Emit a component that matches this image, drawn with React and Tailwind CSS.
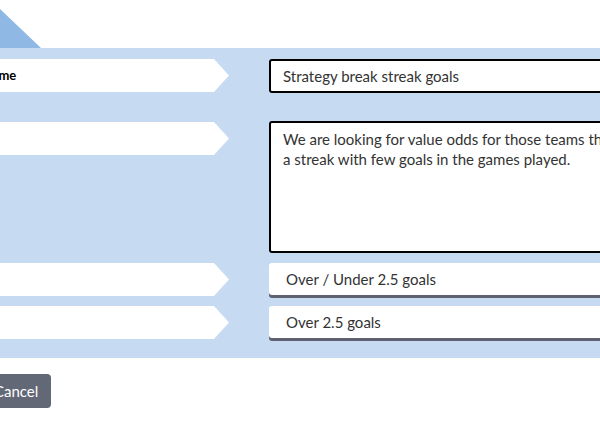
const font = { fontFamily: 'Lato, "Open Sans", sans-serif' }

function Label({ children }) {
  return (
    <div className="flex h-[33px] w-[269px] shrink-0 items-center bg-white pl-[22px] text-[13px] font-bold text-black [clip-path:polygon(0_0,254px_0,269px_50%,254px_100%,0_100%)]">
      {children}
    </div>
  )
}

function Select({ children }) {
  return (
    <div className="flex h-[32px] w-[400px] shrink-0 items-center rounded-[3px] bg-white pl-[17px] text-[15px] text-[#333] shadow-[0_3px_0_#5e6270]">
      {children}
    </div>
  )
}

export default function App() {
  return (
    <div className="relative h-[421px] w-[600px] overflow-hidden bg-white" style={font}>
      <div className="h-[48px]">
        <div className="h-[48px] w-[41px] bg-[#8fb8e4] [clip-path:polygon(0_0,0_100%,100%_100%,0_9px)]" />
      </div>
      <div className="-ml-[40px] flex w-[800px] flex-col bg-[#c6daf2] pt-[11px] pb-[19px]">
        <div className="flex items-start gap-[40px]">
          <Label>Name</Label>
          <div className="flex h-[34px] w-[400px] shrink-0 items-center rounded-[3px] border-2 border-black bg-white pl-[12px] text-[15px] text-[#333]">
            Strategy break streak goals
          </div>
        </div>
        <div className="mt-[28px] flex items-start gap-[40px]">
          <div className="mt-[1px] shrink-0">
            <Label></Label>
          </div>
          <div className="h-[132px] w-[400px] shrink-0 whitespace-nowrap rounded-[3px] border-2 border-black bg-white px-[12px] pt-[6px] text-[15px] leading-[20px] text-[#333]">
            We are looking for value odds for those teams that have
            <br />
            a streak with few goals in the games played.
          </div>
        </div>
        <div className="mt-[10px] flex items-start gap-[40px]">
          <Label></Label>
          <Select>Over / Under 2.5 goals</Select>
        </div>
        <div className="mt-[10px] flex items-start gap-[40px]">
          <Label></Label>
          <Select>Over 2.5 goals</Select>
        </div>
      </div>
      <div className="mt-[16px] -ml-[26px]">
        <button className="h-[34px] rounded-[4px] bg-[#626876] pr-[13px] pl-[20px] text-[15px] text-white">
          Cancel
        </button>
      </div>
    </div>
  )
}
